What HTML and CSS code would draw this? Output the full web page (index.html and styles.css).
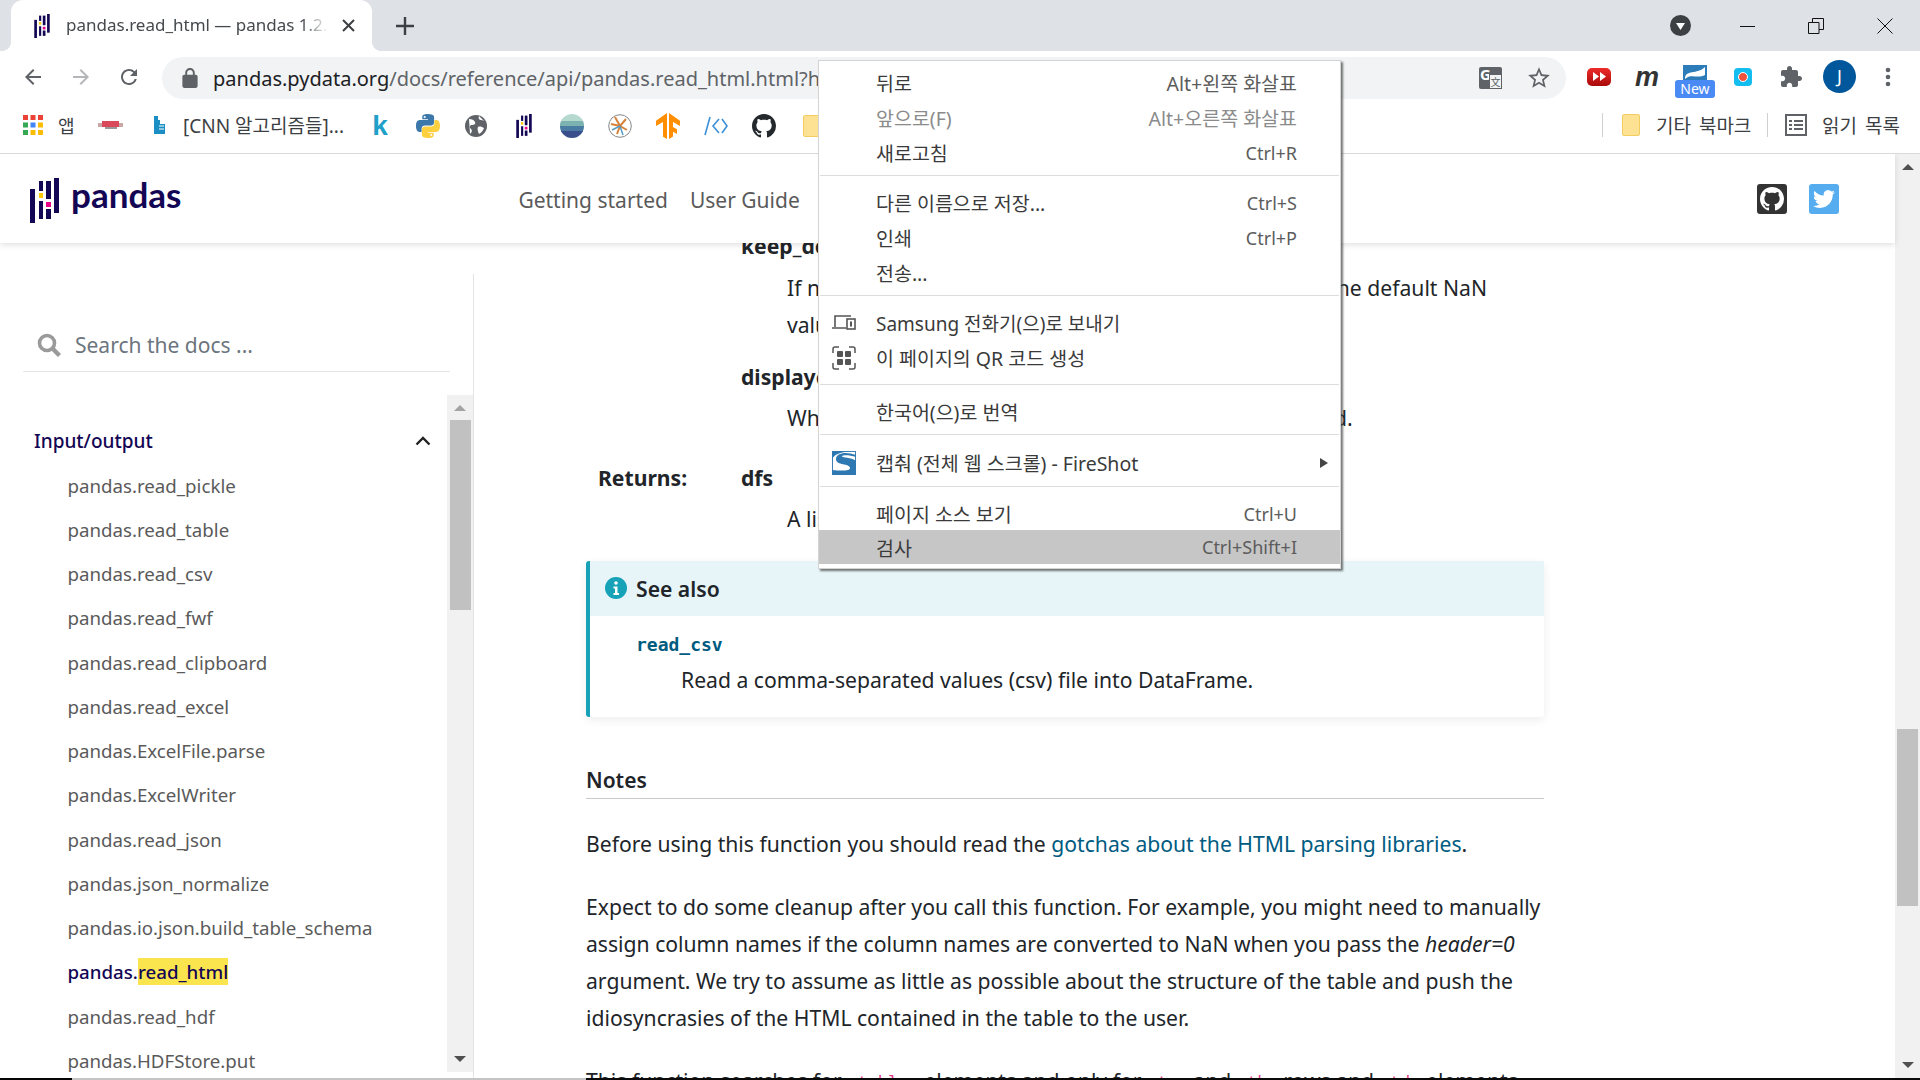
FILE: index.html
```html
<!DOCTYPE html>
<html lang="ko">
  <head>
    <meta charset="utf-8">
    <title>pandas.read_html — pandas 1.2</title>
    <link rel="stylesheet" href="styles.css">
  </head>

  <body>
    <svg class="defs" width="0" height="0">
      <symbol id="pandas-mark" viewBox="0 0 29 45">
        <rect x="0" y="11" width="5" height="34" fill="#130654"/>
        <rect x="9" y="3" width="4" height="10" fill="#130654"/>
        <rect x="9" y="15" width="4" height="5" fill="#ffca00"/>
        <rect x="9" y="23" width="4" height="18" fill="#130654"/>
        <rect x="16" y="3" width="5" height="18" fill="#130654"/>
        <rect x="16" y="24" width="5" height="5" fill="#e70488"/>
        <rect x="16" y="31" width="5" height="10" fill="#130654"/>
        <rect x="24" y="0" width="5" height="35" fill="#130654"/>
      </symbol>
      <symbol id="github-mark" viewBox="0 0 16 16">
        <path d="M8 0C3.58 0 0 3.58 0 8c0 3.54 2.29 6.53 5.47 7.59.4.07.55-.17.55-.38 0-.19-.01-.82-.01-1.49-2.01.37-2.53-.49-2.69-.94-.09-.23-.48-.94-.82-1.13-.28-.15-.68-.52-.01-.53.63-.01 1.08.58 1.23.82.72 1.21 1.87.87 2.33.66.07-.52.28-.87.51-1.07-1.78-.2-3.64-.89-3.64-3.95 0-.87.31-1.59.82-2.15-.08-.2-.36-1.02.08-2.12 0 0 .67-.21 2.2.82.64-.18 1.32-.27 2-.27.68 0 1.36.09 2 .27 1.53-1.04 2.2-.82 2.2-.82.44 1.1.16 1.92.08 2.12.51.56.82 1.27.82 2.15 0 3.07-1.87 3.75-3.65 3.95.29.25.54.73.54 1.48 0 1.07-.01 1.93-.01 2.2 0 .21.15.46.55.38A8.013 8.013 0 0016 8c0-4.42-3.58-8-8-8z"/>
      </symbol>
    </svg>

    <!-- browser chrome -->
    <div class="tabstrip">
      <div class="tab">
        <svg class="tab-icon" width="16" height="24"><use href="#pandas-mark"/></svg>
        <span class="tab-title">pandas.read_html — pandas 1.2.4 documentation</span>
        <svg class="tab-close" width="13" height="13" viewBox="0 0 13 13"><path d="M1 1l11 11M12 1L1 12" stroke="#3c4043" stroke-width="2"/></svg>
      </div>
      <svg class="tab-new" width="18" height="18" viewBox="0 0 18 18"><path d="M9 0v18M0 9h18" stroke="#3c4043" stroke-width="2.4"/></svg>
      <div class="tabstrip-space"></div>
      <div class="tab-search"><svg width="21" height="21" viewBox="0 0 21 21"><circle cx="10.5" cy="10.5" r="10.5" fill="#3c4043"/><path d="M6 8h9l-4.5 7z" fill="#fff"/></svg></div>
      <svg class="win-min" width="16" height="16" viewBox="0 0 16 16"><path d="M0 8.5h15" stroke="#111"/></svg>
      <svg class="win-max" width="16" height="16" viewBox="0 0 16 16"><path d="M.5 4.5h10.500v11H.5zM4.500 4V.5h11v11H11" fill="none" stroke="#111"/></svg>
      <svg class="win-close" width="16" height="16" viewBox="0 0 16 16"><path d="M.5.5l15 15M15.500.5l-15 15" stroke="#111"/></svg>
    </div>

    <div class="toolbar">
      <svg class="nav-btn" width="24" height="24" viewBox="0 0 24 24" fill="#5f6368"><path d="M20 11H7.830l5.590-5.590L12 4l-8 8 8 8 1.410-1.410L7.830 13H20v-2z"/></svg>
      <svg class="nav-btn" width="24" height="24" viewBox="0 0 24 24" fill="#b4b6b9"><path d="M12 4l-1.410 1.410L16.170 11H4v2h12.170l-5.580 5.590L12 20l8-8z"/></svg>
      <svg class="nav-btn" width="24" height="24" viewBox="0 0 24 24" fill="#5f6368"><path d="M17.650 6.350A7.958 7.958 0 0012 4c-4.420 0-7.990 3.580-7.990 8s3.570 8 7.990 8c3.730 0 6.840-2.550 7.730-6h-2.080A5.990 5.990 0 0112 18c-3.310 0-6-2.690-6-6s2.690-6 6-6c1.660 0 3.140.690 4.220 1.780L13 11h7V4l-2.350 2.350z"/></svg>
      <div class="omnibox">
        <svg width="16" height="20" viewBox="4 1 16 21" fill="#5f6368"><path d="M18 8h-1V6c0-2.760-2.240-5-5-5S7 3.240 7 6v2H6c-1.100 0-2 .9-2 2v10c0 1.100.9 2 2 2h12c1.100 0 2-.9 2-2V10c0-1.100-.9-2-2-2zM9 8V6c0-1.660 1.340-3 3-3s3 1.340 3 3v2H9z"/></svg>
        <span class="url"><b>pandas.pydata.org</b>/docs/reference/api/pandas.read_html.html?highlight=read_html</span>
        <div class="translate-icon"><span class="translate-g">G</span><span class="translate-x">文</span></div>
        <svg class="star" width="26" height="26" viewBox="0 0 24 24" fill="#5f6368"><path d="M22 9.240l-7.190-.62L12 2 9.190 8.630 2 9.240l5.460 4.730L5.820 21 12 17.270 18.180 21l-1.630-7.030L22 9.240zM12 15.400l-3.760 2.270 1-4.280-3.320-2.880 4.380-.38L12 6.100l1.710 4.040 4.380.38-3.320 2.880 1 4.280L12 15.400z"/></svg>
      </div>
      <div class="ext ext-yt"><svg width="13" height="9" viewBox="0 0 13 9"><path d="M0 0l6 4.500L0 9zM7 0l6 4.500L7 9z" fill="#fff"/></svg></div>
      <div class="ext ext-m">m</div>
      <div class="ext ext-new">
        <svg width="24" height="16" viewBox="0 0 24 16"><rect width="24" height="16" fill="#2b7cb8"/><path d="M2 14C2 4 14 10 22 2v8c-8 4-14-2-20 4z" fill="#fff"/></svg>
        <span class="new-badge">New</span>
      </div>
      <div class="ext ext-rec"><span></span></div>
      <svg class="ext-puzzle" width="24" height="24" viewBox="0 0 24 24" fill="#5f6368"><path d="M20.500 11H19V7c0-1.100-.9-2-2-2h-4V3.500C13 2.120 11.880 1 10.500 1S8 2.120 8 3.500V5H4c-1.100 0-1.990.9-1.990 2v3.800H3.500c1.490 0 2.700 1.210 2.700 2.700s-1.210 2.700-2.700 2.700H2V20c0 1.100.9 2 2 2h3.800v-1.500c0-1.490 1.210-2.700 2.700-2.700 1.490 0 2.700 1.210 2.700 2.700V22H17c1.100 0 2-.9 2-2v-4h1.500c1.380 0 2.500-1.120 2.500-2.500S21.880 11 20.500 11z"/></svg>
      <div class="avatar">J</div>
      <svg class="kebab" width="8" height="20" viewBox="0 0 8 20" fill="#5f6368"><circle cx="4" cy="3" r="2.300"/><circle cx="4" cy="10" r="2.300"/><circle cx="4" cy="17" r="2.300"/></svg>
    </div>

    <div class="bookmarks">
      <svg class="apps" width="20" height="20" viewBox="0 0 20 20">
        <rect width="5" height="5" fill="#ea4335"/><rect x="7.500" width="5" height="5" fill="#ea4335"/><rect x="15" width="5" height="5" fill="#ea4335"/>
        <rect y="7.500" width="5" height="5" fill="#34a853"/><rect x="7.500" y="7.500" width="5" height="5" fill="#4285f4"/><rect x="15" y="7.500" width="5" height="5" fill="#fbbc05"/>
        <rect y="15" width="5" height="5" fill="#34a853"/><rect x="7.500" y="15" width="5" height="5" fill="#fbbc05"/><rect x="15" y="15" width="5" height="5" fill="#fbbc05"/>
      </svg>
      <span class="bm-apps-label">앱</span>
      <svg class="bm-red" width="25" height="10" viewBox="0 0 25 10"><rect y="3" width="25" height="4" fill="#c9a7a7"/><rect x="4" y="1" width="17" height="6" fill="#d9495a"/><rect x="7" y="7" width="12" height="2" fill="#999"/></svg>
      <svg class="bm-blue" width="11" height="20" viewBox="0 0 11 20"><path d="M0 1h4v4h2v4h5v10H0z" fill="#1b8fc4"/><path d="M5 11h5M5 14h5" stroke="#fff"/></svg>
      <span class="bm-title">[CNN 알고리즘들]...</span>
      <span class="bm bm-k">k</span>
      <span class="bm"><svg width="24" height="24" viewBox="0 0 24 24"><path d="M11.900 0C6 0 6.300 2.600 6.300 2.600v2.700H12v.8H4S0 5.600 0 11.900s3.500 6 3.500 6h2.100v-2.900s-.1-3.500 3.400-3.500h5.800s3.300.1 3.300-3.200V3.200S18.600 0 11.900 0zM8.700 1.900a1 1 0 110 2.100 1 1 0 010-2.100z" fill="#3c78aa"/><path d="M12.100 24c5.900 0 5.600-2.600 5.600-2.600v-2.700H12v-.8h8s4 .5 4-5.800-3.500-6-3.500-6h-2.100V9s.1 3.500-3.400 3.500H9.200s-3.300-.1-3.300 3.200v5.100S5.400 24 12.100 24zm3.200-1.900a1 1 0 110-2.100 1 1 0 010 2.100z" fill="#fdd040"/></svg></span>
      <span class="bm"><svg width="22" height="22" viewBox="0 0 22 22"><circle cx="11" cy="11" r="11" fill="#5f6368"/><path d="M4 4c3 0 5 1 6 3s-1 3-3 3-3 2-1 4 0 4-1 5M14 1c-1 2 0 4 2 4s3 1 4 2M13 12c2-1 4 0 6 1-1 3-3 5-5 6-1-2-2-5-1-7z" fill="#fff"/></svg></span>
      <span class="bm"><svg width="16" height="24"><use href="#pandas-mark"/></svg></span>
      <span class="bm"><svg width="24" height="24" viewBox="0 0 24 24"><defs><clipPath id="blob"><circle cx="12" cy="12" r="12"/></clipPath></defs><g clip-path="url(#blob)"><rect width="24" height="24" fill="#b5d9cf"/><rect y="7" width="24" height="6" fill="#7cb3b0"/><rect y="12" width="24" height="6" fill="#4a7ca3"/><rect y="17" width="24" height="7" fill="#3b4e8c"/></g></svg></span>
      <span class="bm"><svg width="24" height="24" viewBox="0 0 24 24"><circle cx="12" cy="12" r="11.300" fill="#fff" stroke="#888"/><path d="M12 12L7 3M12 12l6-7M12 12l7 4M12 12l-3 8M12 12L3 10" stroke="#d8823a" stroke-width="2"/><path d="M12 12l-8 4M12 12l3 9" stroke="#5a9bc0" stroke-width="1.500"/></svg></span>
      <span class="bm"><svg width="24" height="26" viewBox="0 0 24 26"><path d="M11 0v26l-4-2.300V9L0 13V7.700zM13 0l11 7.700V13l-7-4v5l4 2.300v4.700l-4-2.300v4.700L13 26z" fill="#ff8f00"/></svg></span>
      <span class="bm bm-code"><svg width="24" height="20" viewBox="0 0 24 20" fill="none" stroke="#3c90d8" stroke-width="1.600"><path d="M6 1L1 19M15 3L9 10l6 7M18 3l5 7-5 7"/></svg></span>
      <span class="bm"><svg width="24" height="24" fill="#24292e"><use href="#github-mark"/></svg></span>
      <span class="bm"><span class="folder"></span></span>
      <div class="bookmarks-space"></div>
      <span class="bm-sep"></span>
      <span class="folder folder-other"></span>
      <span class="bm-other">기타 북마크</span>
      <span class="bm-sep bm-sep-2"></span>
      <svg class="reading-icon" width="22" height="22" viewBox="0 0 22 22" fill="none" stroke="#5f6368" stroke-width="2"><rect x="1" y="1" width="20" height="20"/><path d="M4 7h3M9 7h9M4 11h3M9 11h9M4 15h3M9 15h9"/></svg>
      <span class="bm-reading">읽기 목록</span>
    </div>

    <!-- page -->
    <div class="page">
      <div class="viewport">
        <header class="site-header">
          <svg class="logo-mark" width="29" height="45"><use href="#pandas-mark"/></svg>
          <span class="logo-word">pandas</span>
          <nav class="site-nav">
            <a>Getting started</a>
            <a>User Guide</a>
          </nav>
          <div class="site-icons">
            <span class="social social-gh"><svg width="24" height="24" fill="#fff"><use href="#github-mark"/></svg></span>
            <span class="social social-tw"><svg width="22" height="22" viewBox="0 0 24 24" fill="#fff"><path d="M23.953 4.570a10 10 0 01-2.825.775 4.958 4.958 0 002.163-2.723c-.951.555-2.005.959-3.127 1.184a4.920 4.920 0 00-8.384 4.482C7.690 8.095 4.067 6.130 1.640 3.162a4.822 4.822 0 00-.666 2.475c0 1.710.870 3.213 2.188 4.096a4.904 4.904 0 01-2.228-.616v.060a4.923 4.923 0 003.946 4.827 4.996 4.996 0 01-2.212.085 4.936 4.936 0 004.604 3.417 9.867 9.867 0 01-6.102 2.105c-.390 0-.779-.023-1.170-.067a13.995 13.995 0 007.557 2.209c9.053 0 13.998-7.496 13.998-13.985 0-.210 0-.420-.015-.630A9.935 9.935 0 0024 4.590z"/></svg></span>
          </div>
        </header>

        <div class="content-row">
          <aside class="sidebar">
            <div class="search">
              <svg width="24" height="24" viewBox="0 0 24 24" fill="none" stroke="#9a9a9a" stroke-width="3.600"><circle cx="10" cy="10" r="7.500"/><path d="M15.500 15.500L22.500 22.500" stroke-width="4.400"/></svg>
              <span class="search-text">Search the docs ...</span>
            </div>
            <div class="side-nav">
              <div class="side-list">
                <div class="side-head">
                  <span>Input/output</span>
                  <svg width="16" height="10" viewBox="0 0 16 10" fill="none" stroke="#222" stroke-width="2.400"><path d="M1.500 8.500L8 2l6.500 6.500"/></svg>
                </div>
                <a class="side-item">pandas.read_pickle</a>
                <a class="side-item">pandas.read_table</a>
                <a class="side-item">pandas.read_csv</a>
                <a class="side-item">pandas.read_fwf</a>
                <a class="side-item">pandas.read_clipboard</a>
                <a class="side-item">pandas.read_excel</a>
                <a class="side-item">pandas.ExcelFile.parse</a>
                <a class="side-item">pandas.ExcelWriter</a>
                <a class="side-item">pandas.read_json</a>
                <a class="side-item">pandas.json_normalize</a>
                <a class="side-item">pandas.io.json.build_table_schema</a>
                <a class="side-item active">pandas.<mark>read_html</mark></a>
                <a class="side-item">pandas.read_hdf</a>
                <a class="side-item">pandas.HDFStore.put</a>
              </div>
              <div class="scrollbar side-scroll">
                <span class="arrow-up arrow-dim"></span>
                <span class="thumb"></span>
                <span class="scroll-space"></span>
                <span class="arrow-down"></span>
              </div>
            </div>
          </aside>

          <main class="doc">
            <div class="doc-inner">
              <div class="field-row">
                <div></div>
                <div>
                  <div class="term">keep_default_na : bool, default True</div>
                  <div class="def def-first">If na_values are specified and keep_default_na is False the default NaN</div>
                  <div class="def">values are overridden, otherwise they’re appended to.</div>
                  <div class="term term-next">displayed_only : bool, default True</div>
                  <div class="def def-tight">Whether elements with “display: none” should be parsed.</div>
                </div>
              </div>
              <div class="field-row field-returns">
                <div class="field-label">Returns:</div>
                <div>
                  <div class="term">dfs</div>
                  <div class="def def-tight">A list of DataFrames.</div>
                </div>
              </div>

              <div class="admonition">
                <div class="admonition-title">
                  <svg width="22" height="22" viewBox="0 0 22 22"><circle cx="11" cy="11" r="11" fill="#17a2b8"/><circle cx="11" cy="6" r="1.800" fill="#fff"/><path d="M8.500 9.500h4v6.500h1.500v2H8.500v-2H10v-4.500H8.500z" fill="#fff"/></svg>
                  <span>See also</span>
                </div>
                <div class="admonition-body">
                  <code class="see-link">read_csv</code>
                  <div class="see-desc">Read a comma-separated values (csv) file into DataFrame.</div>
                </div>
              </div>

              <h3 class="notes-head">Notes</h3>
              <p class="para para-first">Before using this function you should read the <a class="link">gotchas about the HTML parsing libraries</a>.</p>
              <p class="para">Expect to do some cleanup after you call this function. For example, you might need to manually assign column names if the column names are converted to NaN when you pass the <em>header=0</em> argument. We try to assume as little as possible about the structure of the table and push the idiosyncrasies of the HTML contained in the table to the user.</p>
              <p class="para">This function searches for <code>&lt;table&gt;</code> elements and only for <code>&lt;tr&gt;</code> and <code>&lt;th&gt;</code> rows and <code>&lt;td&gt;</code> elements within each <code>&lt;tr&gt;</code> or <code>&lt;th&gt;</code> element in the table.</p>
            </div>
          </main>
        </div>
      </div>

      <div class="scrollbar page-scroll">
        <span class="arrow-up"></span>
        <span class="thumb"></span>
        <span class="scroll-space"></span>
        <span class="arrow-down"></span>
      </div>
    </div>

    <div class="taskbar-edge">
      <span class="edge-a"></span>
      <span class="edge-b"></span>
      <span class="edge-c"></span>
    </div>

    <!-- context menu -->
    <div class="menu">
      <div class="menu-row"><span class="menu-icon"></span><span>뒤로</span><span class="menu-key menu-key-ko">Alt+왼쪽 화살표</span></div>
      <div class="menu-row disabled"><span class="menu-icon"></span><span>앞으로(F)</span><span class="menu-key menu-key-ko">Alt+오른쪽 화살표</span></div>
      <div class="menu-row"><span class="menu-icon"></span><span>새로고침</span><span class="menu-key">Ctrl+R</span></div>
      <div class="menu-sep"></div>
      <div class="menu-row"><span class="menu-icon"></span><span>다른 이름으로 저장...</span><span class="menu-key">Ctrl+S</span></div>
      <div class="menu-row"><span class="menu-icon"></span><span>인쇄</span><span class="menu-key">Ctrl+P</span></div>
      <div class="menu-row"><span class="menu-icon"></span><span>전송...</span></div>
      <div class="menu-sep"></div>
      <div class="menu-row"><span class="menu-icon"><svg width="24" height="18" viewBox="0 0 24 18" fill="none" stroke="#555" stroke-width="1.600"><path d="M3 13V2h16M0 14h14"/><rect x="15" y="5" width="8" height="10"/><path d="M18 7.500h2v5h-2z" fill="#555" stroke="none"/></svg></span><span class="menu-label-narrow">Samsung 전화기(으)로 보내기</span></div>
      <div class="menu-row menu-row-last"><span class="menu-icon"><svg width="24" height="24" viewBox="0 0 24 24" fill="#555"><rect x="5" y="5" width="6" height="6" rx="1"/><rect x="13" y="5" width="6" height="6" rx="1"/><rect x="5" y="13" width="6" height="6" rx="1"/><rect x="13" y="13" width="6" height="6" rx="1"/><path d="M1 7V3a2 2 0 012-2h4M17 1h4a2 2 0 012 2v4M23 17v4a2 2 0 01-2 2h-4M7 23H3a2 2 0 01-2-2v-4" fill="none" stroke="#555" stroke-width="1.500"/></svg></span><span>이 페이지의 QR 코드 생성</span></div>
      <div class="menu-sep"></div>
      <div class="menu-row"><span class="menu-icon"></span><span>한국어(으)로 번역</span></div>
      <div class="menu-sep"></div>
      <div class="menu-row menu-row-tall"><span class="menu-icon"><svg width="24" height="24" viewBox="0 0 24 24"><rect x=".5" y=".5" width="23" height="23" fill="#fff" stroke="#3f7fb5"/><path d="M24 4C14 0 4 2 4 8c0 7 14 4 14 9 0 3-8 3-18 2v5h24V10C20 6 9 7 10 5c1-1 8-1 14 1z" fill="#2f79b3"/><path d="M0 0h20C10 1 0 3 0 10z" fill="#2f79b3"/></svg></span><span>캡춰 (전체 웹 스크롤) - FireShot</span><span class="menu-more"></span></div>
      <div class="menu-sep"></div>
      <div class="menu-row menu-row-short"><span class="menu-icon"></span><span>페이지 소스 보기</span><span class="menu-key">Ctrl+U</span></div>
      <div class="menu-row menu-row-hover"><span class="menu-icon"></span><span>검사</span><span class="menu-key">Ctrl+Shift+I</span></div>
    </div>
  </body>
</html>
```

FILE: styles.css
```css
* {
  box-sizing: border-box;
}

html,
body {
  margin: 0;
  height: 100%;
  overflow: hidden;
}

body {
  display: flex;
  flex-direction: column;
  height: 1080px;
  position: relative;
  font-family: "Noto Sans", "Noto Sans CJK KR", sans-serif;
  color: #212529;
  background: white;
}

.defs {
  position: absolute;
}

/* tab strip */
.tabstrip {
  display: flex;
  align-items: center;
  flex: 0 0 51px;
  background: #dee1e6;
  padding-left: 11px;
}

.tab {
  position: relative;
  display: flex;
  align-items: center;
  width: 361px;
  height: 51px;
  padding-left: 23px;
  background: white;
  border-radius: 12px 12px 0 0;
}

.tab::before,
.tab::after {
  content: "";
  position: absolute;
  bottom: 0;
  width: 10px;
  height: 10px;
}

.tab::before {
  left: -10px;
  background: radial-gradient(circle at 0 0, transparent 10px, white 10.500px);
}

.tab::after {
  right: -10px;
  background: radial-gradient(circle at 100% 0, transparent 10px, white 10.500px);
}

.tab-title {
  width: 262px;
  margin-left: 16px;
  padding-bottom: 2px;
  font-size: 17px;
  color: #45494d;
  white-space: nowrap;
  overflow: hidden;
  -webkit-mask-image: linear-gradient(to right, black 90%, transparent);
  mask-image: linear-gradient(to right, black 90%, transparent);
}

.tab-close {
  margin-left: 14px;
}

.tab-new {
  margin-left: 24px;
}

.tabstrip-space {
  flex: 1;
}

.tab-search {
  display: flex;
  margin-right: 49px;
}

.win-max {
  margin-left: 52px;
}

.win-close {
  margin-left: 53px;
  margin-right: 27px;
}

/* toolbar */
.toolbar {
  display: flex;
  align-items: center;
  flex: 0 0 51px;
  padding-left: 21px;
  background: white;
}

.nav-btn {
  margin-right: 24px;
}

.nav-btn:nth-child(3) {
  margin-right: 21px;
}

.omnibox {
  display: flex;
  align-items: center;
  width: 1404px;
  height: 42px;
  margin-top: 2px;
  padding-left: 20px;
  border-radius: 21px;
  background: #f1f3f4;
}

.url {
  width: 1253px;
  margin-left: 15px;
  padding-top: 2px;
  font-size: 20px;
  color: #5f6368;
  white-space: nowrap;
  overflow: hidden;
}

.url b {
  font-weight: normal;
  color: #202124;
}

.translate-icon {
  position: relative;
  width: 23px;
  height: 22px;
  margin-left: 13px;
  background: #5f6368;
  border-radius: 2px;
}

.translate-g {
  position: absolute;
  left: 1px;
  top: -3px;
  font-size: 15px;
  font-weight: bold;
  color: white;
}

.translate-x {
  position: absolute;
  right: 0;
  bottom: 0;
  width: 13px;
  height: 15px;
  font-size: 10px;
  line-height: 15px;
  text-align: center;
  background: #f1f3f4;
  border: 1px solid #5f6368;
  color: #5f6368;
}

.star {
  margin-left: 24px;
}

.ext {
  display: flex;
  align-items: center;
  justify-content: center;
}

.ext-yt {
  width: 24px;
  height: 18px;
  margin-left: 21px;
  border-radius: 5px;
  background: linear-gradient(#ee2b2b, #a80a0a);
}

.ext-m {
  width: 22px;
  margin-left: 25px;
  font-family: "Liberation Sans", sans-serif;
  font-size: 27px;
  font-weight: bold;
  font-style: italic;
  line-height: 24px;
  color: #333;
}

.ext-new {
  position: relative;
  flex-direction: column;
  width: 40px;
  height: 33px;
  margin-left: 17px;
  margin-top: 9px;
  justify-content: flex-start;
}

.new-badge {
  position: absolute;
  left: 0;
  bottom: 0;
  width: 40px;
  height: 18px;
  border-radius: 3px;
  background: #4a8af4;
  color: white;
  font-size: 14px;
  line-height: 18px;
  text-align: center;
}

.ext-rec {
  width: 18px;
  height: 18px;
  margin-left: 19px;
  border-radius: 4px;
  background: #14bdf0;
}

.ext-rec span {
  width: 10px;
  height: 10px;
  border-radius: 50%;
  background: #f0523c;
  border: 1px solid white;
}

.ext-puzzle {
  margin-left: 27px;
}

.avatar {
  width: 33px;
  height: 33px;
  margin-left: 20px;
  border-radius: 50%;
  background: #01579b;
  color: white;
  font-size: 18px;
  line-height: 33px;
  text-align: center;
}

.kebab {
  margin-left: 28px;
}

/* bookmarks bar */
.bookmarks {
  display: flex;
  align-items: center;
  flex: 0 0 52px;
  padding-left: 23px;
  padding-bottom: 5px;
  border-bottom: 1px solid #d9d9d9;
  background: white;
  font-size: 18px;
  color: #3c4043;
  white-space: nowrap;
}

.bm-apps-label {
  margin-left: 15px;
  width: 25px;
}

.bm-red {
  margin-left: 15px;
}

.bm-blue {
  margin-left: 31px;
}

.bm-title {
  width: 173px;
  margin-left: 18px;
  font-size: 19px;
}

.bm {
  display: flex;
  align-items: center;
  justify-content: center;
  width: 48px;
  height: 30px;
  margin-top: 1px;
}

.bm-k {
  font-family: "Liberation Sans", sans-serif;
  font-size: 28px;
  font-weight: bold;
  color: #20a0c8;
}

.folder {
  display: block;
  width: 18px;
  height: 22px;
  background: #fde293;
  border: 1px solid #f3cd62;
  border-radius: 2px;
}

.bookmarks-space {
  flex: 1;
}

.bm-sep {
  width: 1px;
  height: 24px;
  background: #d0d0d0;
}

.folder-other {
  margin-left: 19px;
}

.bm-other {
  width: 111px;
  margin-left: 16px;
  font-size: 19px;
  word-spacing: 3px;
}

.reading-icon {
  margin-left: 17px;
}

.bm-reading {
  width: 98px;
  margin-left: 15px;
  font-size: 19px;
  word-spacing: 3px;
}

/* page */
.page {
  display: flex;
  flex: 0 0 924px;
  overflow: hidden;
}

.viewport {
  display: flex;
  flex-direction: column;
  flex: 1;
  min-width: 0;
}

.site-header {
  position: relative;
  z-index: 2;
  display: flex;
  align-items: center;
  flex: 0 0 89px;
  padding-left: 30px;
  background: white;
  box-shadow: 0 2px 6px rgba(0, 0, 0, 0.12);
}

.logo-mark {
  margin-top: 3px;
}

.logo-word {
  margin-left: 12px;
  margin-top: -10px;
  font-family: "Lato", sans-serif;
  font-size: 35px;
  font-weight: bold;
  color: #130654;
}

.site-nav {
  display: flex;
  gap: 22px;
  margin-left: 337px;
  padding-top: 2px;
  font-size: 21px;
  color: #5a5a5a;
}

.site-icons {
  display: flex;
  gap: 22px;
  margin-left: auto;
  margin-right: 56px;
}

.social {
  display: flex;
  align-items: center;
  justify-content: center;
  width: 30px;
  height: 30px;
  border-radius: 3px;
}

.social-gh {
  background: #333;
}

.social-tw {
  background: #55acee;
}

.content-row {
  display: flex;
  flex: 1;
  min-height: 0;
}

/* sidebar */
.sidebar {
  display: flex;
  flex-direction: column;
  flex: 0 0 474px;
  margin-top: 31px;
  border-right: 1px solid #e4e4e4;
}

.search {
  display: flex;
  align-items: center;
  width: 427px;
  height: 55px;
  margin: 43px 0 23px 23px;
  padding-left: 14px;
  padding-top: 2px;
  border-bottom: 1px solid #e5e5e5;
}

.search-text {
  margin-left: 14px;
  font-size: 21px;
  color: #6c757d;
}

.side-nav {
  display: flex;
  height: 677px;
}

.side-list {
  flex: 1;
  min-width: 0;
  padding-top: 24px;
  overflow: hidden;
}

.side-head {
  display: flex;
  align-items: center;
  justify-content: space-between;
  height: 44.500px;
  padding: 0 16px 0 34px;
  font-size: 19px;
  font-weight: 500;
  color: #130654;
}

.side-item {
  display: block;
  height: 44.250px;
  padding-left: 67.500px;
  font-size: 18.700px;
  line-height: 44px;
  color: #5a5a5a;
  white-space: nowrap;
}

.side-item.active {
  font-weight: 500;
  color: #130654;
}

mark {
  display: inline-block;
  line-height: 27px;
  background: #fbe54e;
  color: #130654;
}

/* scrollbars */
.scrollbar {
  display: flex;
  flex-direction: column;
  align-items: center;
  background: #f1f1f1;
}

.thumb {
  width: 21px;
  background: #c1c1c1;
}

.scroll-space {
  flex: 1;
}

.arrow-up,
.arrow-down {
  flex: 0 0 25px;
  width: 0;
  border-left: 6px solid transparent;
  border-right: 6px solid transparent;
}

.arrow-up {
  height: 0;
  flex: 0 0 6px;
  margin: 10px 0 9px;
  border-bottom: 6px solid #505050;
}

.arrow-down {
  height: 0;
  flex: 0 0 6px;
  margin: 9px 0 10px;
  border-top: 6px solid #505050;
}

.arrow-dim {
  border-bottom-color: #a3a3a3;
}

.side-scroll {
  flex: 0 0 26px;
}

.side-scroll .thumb {
  height: 190px;
}

.page-scroll {
  flex: 0 0 25px;
}

.page-scroll .thumb {
  height: 177px;
  margin-top: 550px;
}

/* document */
.doc {
  flex: 1;
  min-width: 0;
  overflow: hidden;
  padding: 0 351px 0 112px;
  font-size: 21.150px;
  line-height: 37px;
  color: #212529;
}

.doc-inner {
  margin-top: -16px;
}

.field-row {
  display: grid;
  grid-template-columns: 155px 1fr;
}

.field-returns {
  margin-top: 23px;
}

.field-label {
  padding-left: 12px;
  font-weight: bold;
}

.term {
  font-weight: bold;
  white-space: nowrap;
}

.term-next {
  margin-top: 15px;
}

.def {
  padding-left: 46px;
  white-space: nowrap;
}

.def-first {
  margin-top: 5px;
}

.def-tight {
  margin-top: 4px;
}

.admonition {
  margin-top: 24px;
  border-left: 4px solid #17a2b8;
  border-radius: 3px;
  box-shadow: 0 3px 10px rgba(0, 0, 0, 0.07);
}

.admonition-title {
  display: flex;
  align-items: center;
  height: 55px;
  padding-left: 15px;
  padding-bottom: 1px;
  background: #e7f5f9;
  font-weight: 600;
}

.admonition-title span {
  margin-left: 9px;
}

.admonition-body {
  height: 101px;
  padding: 14px 0 0 46px;
}

.see-link {
  display: block;
  font-family: "DejaVu Sans Mono", monospace;
  font-size: 18px;
  font-weight: bold;
  line-height: 30px;
  color: #005b81;
}

.see-desc {
  margin-top: 1px;
  padding-left: 45px;
  white-space: nowrap;
}

.notes-head {
  margin: 48px 0 0;
  padding-bottom: 3px;
  border-bottom: 1px solid #c9c9c9;
  font-size: 21px;
  font-weight: 600;
  line-height: 30px;
}

.para {
  margin: 26px 0 0;
}

.link {
  color: #005b81;
}

.para code {
  font-family: "DejaVu Sans Mono", monospace;
  font-size: 17px;
  color: #e83e8c;
}

/* bottom edge of the capture */
.taskbar-edge {
  display: flex;
  flex: 0 0 2px;
  background: #111;
}

.edge-a {
  width: 72px;
  background: #050505;
}

.edge-b {
  width: 514px;
  background: #c4c4c4;
}

.edge-c {
  flex: 1;
  background: #0a0a0a;
}

/* context menu, lies over the page */
.menu {
  position: absolute;
  left: 818px;
  top: 60px;
  z-index: 5;
  width: 523px;
  height: 509px;
  padding-top: 5px;
  background: white;
  border: 1px solid #d4d4d4;
  box-shadow: 2px 2px 2px rgba(60, 60, 60, 0.7);
  font-size: 19.500px;
  color: #3a3a3a;
}

.menu-row {
  display: flex;
  align-items: center;
  height: 35px;
  padding: 0 43px 2px 13px;
  white-space: nowrap;
}

.menu-row.disabled {
  color: #8b8b8b;
}

.menu-row-last {
  margin-bottom: 8px;
}

.menu-row-tall {
  height: 37px;
}

.menu-row-short {
  height: 33px;
  padding-bottom: 0;
}

.menu-row-hover {
  height: 34px;
  padding-bottom: 0;
  background: #c6c6c6;
}

.menu-label-narrow {
  font-size: 19px;
}

.menu-icon {
  display: flex;
  align-items: center;
  flex: 0 0 24px;
  margin-right: 20px;
}

.menu-key {
  margin-left: auto;
  font-size: 18px;
  color: #5c5c5c;
}

.menu-key-ko {
  font-size: 19.500px;
}

.menu-row.disabled .menu-key {
  color: #8b8b8b;
}

.menu-more {
  margin-left: auto;
  margin-right: -31px;
  border-left: 8px solid #444;
  border-top: 5.500px solid transparent;
  border-bottom: 5.500px solid transparent;
}

.menu-sep {
  height: 1px;
  margin: 4px 1px 10px;
  background: #dcdcdc;
}
```
